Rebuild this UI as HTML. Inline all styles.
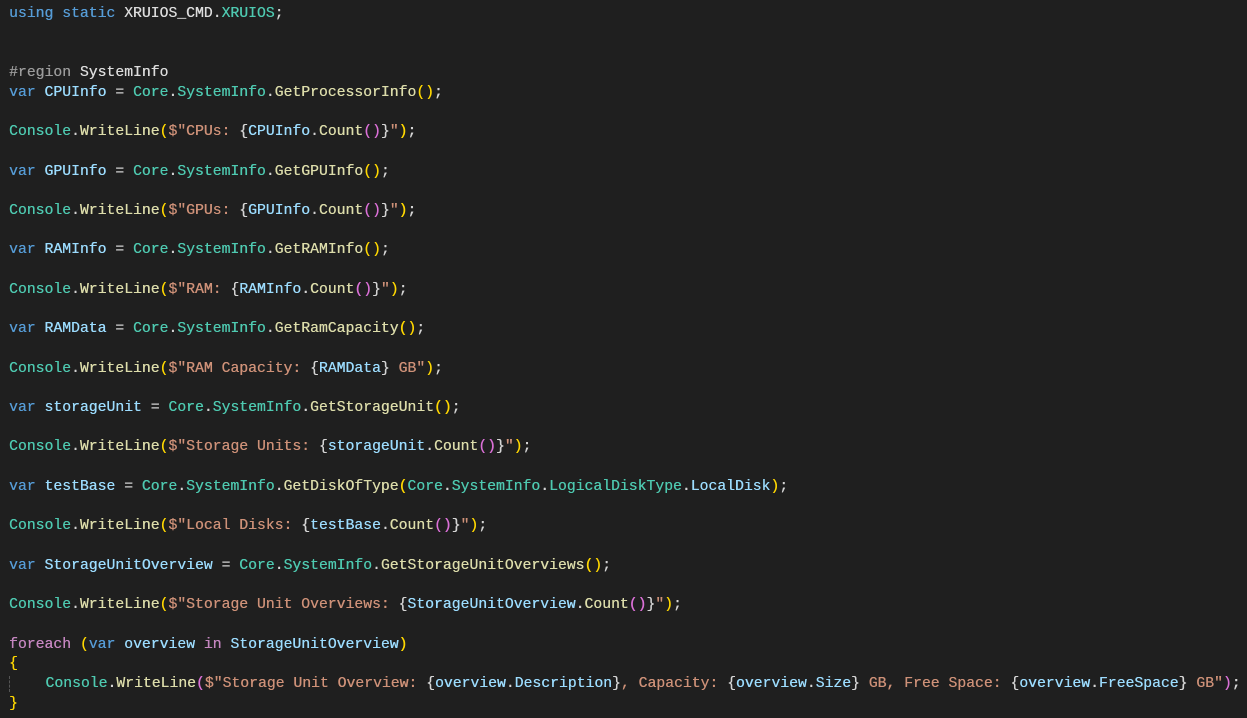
<!DOCTYPE html>
<html><head><meta charset="utf-8"><style>
html,body{margin:0;padding:0;background:#1f1f1f;width:1247px;height:718px;overflow:hidden}
pre{margin:0;position:absolute;left:9px;top:5px;font-family:"Liberation Mono",monospace;font-size:14.75px;line-height:19.71px;color:#d4d4d4;white-space:pre;text-shadow:0.3px 0 0 currentColor}
.k{color:#569cd6}.c{color:#c586c0}.t{color:#4ec9b0}.f{color:#dcdcaa}.s{color:#ce9178}.v{color:#9cdcfe}.p{color:#9b9b9b}.y{color:#ffd700}.m{color:#da70d6}.w{color:#dcdcdc}
.g{border-left:1px dashed #555}
</style></head><body><pre><span class="k">using static</span> <span class="w">XRUIOS_CMD</span>.<span class="t">XRUIOS</span>;


<span class="p">#region</span> <span class="w">SystemInfo</span>
<span class="k">var</span> <span class="v">CPUInfo</span> = <span class="t">Core</span>.<span class="t">SystemInfo</span>.<span class="f">GetProcessorInfo</span><span class="y">()</span>;

<span class="t">Console</span>.<span class="f">WriteLine</span><span class="y">(</span><span class="s">$"CPUs: </span>{<span class="v">CPUInfo</span>.<span class="f">Count</span><span class="m">()</span>}<span class="s">"</span><span class="y">)</span>;

<span class="k">var</span> <span class="v">GPUInfo</span> = <span class="t">Core</span>.<span class="t">SystemInfo</span>.<span class="f">GetGPUInfo</span><span class="y">()</span>;

<span class="t">Console</span>.<span class="f">WriteLine</span><span class="y">(</span><span class="s">$"GPUs: </span>{<span class="v">GPUInfo</span>.<span class="f">Count</span><span class="m">()</span>}<span class="s">"</span><span class="y">)</span>;

<span class="k">var</span> <span class="v">RAMInfo</span> = <span class="t">Core</span>.<span class="t">SystemInfo</span>.<span class="f">GetRAMInfo</span><span class="y">()</span>;

<span class="t">Console</span>.<span class="f">WriteLine</span><span class="y">(</span><span class="s">$"RAM: </span>{<span class="v">RAMInfo</span>.<span class="f">Count</span><span class="m">()</span>}<span class="s">"</span><span class="y">)</span>;

<span class="k">var</span> <span class="v">RAMData</span> = <span class="t">Core</span>.<span class="t">SystemInfo</span>.<span class="f">GetRamCapacity</span><span class="y">()</span>;

<span class="t">Console</span>.<span class="f">WriteLine</span><span class="y">(</span><span class="s">$"RAM Capacity: </span>{<span class="v">RAMData</span>}<span class="s"> GB"</span><span class="y">)</span>;

<span class="k">var</span> <span class="v">storageUnit</span> = <span class="t">Core</span>.<span class="t">SystemInfo</span>.<span class="f">GetStorageUnit</span><span class="y">()</span>;

<span class="t">Console</span>.<span class="f">WriteLine</span><span class="y">(</span><span class="s">$"Storage Units: </span>{<span class="v">storageUnit</span>.<span class="f">Count</span><span class="m">()</span>}<span class="s">"</span><span class="y">)</span>;

<span class="k">var</span> <span class="v">testBase</span> = <span class="t">Core</span>.<span class="t">SystemInfo</span>.<span class="f">GetDiskOfType</span><span class="y">(</span><span class="t">Core</span>.<span class="t">SystemInfo</span>.<span class="t">LogicalDiskType</span>.<span class="v">LocalDisk</span><span class="y">)</span>;

<span class="t">Console</span>.<span class="f">WriteLine</span><span class="y">(</span><span class="s">$"Local Disks: </span>{<span class="v">testBase</span>.<span class="f">Count</span><span class="m">()</span>}<span class="s">"</span><span class="y">)</span>;

<span class="k">var</span> <span class="v">StorageUnitOverview</span> = <span class="t">Core</span>.<span class="t">SystemInfo</span>.<span class="f">GetStorageUnitOverviews</span><span class="y">()</span>;

<span class="t">Console</span>.<span class="f">WriteLine</span><span class="y">(</span><span class="s">$"Storage Unit Overviews: </span>{<span class="v">StorageUnitOverview</span>.<span class="f">Count</span><span class="m">()</span>}<span class="s">"</span><span class="y">)</span>;

<span class="c">foreach</span> <span class="y">(</span><span class="k">var</span> <span class="v">overview</span> <span class="c">in</span> <span class="v">StorageUnitOverview</span><span class="y">)</span>
<span class="y">{</span>
<span class="g"> </span>   <span class="t">Console</span>.<span class="f">WriteLine</span><span class="m">(</span><span class="s">$"Storage Unit Overview: </span>{<span class="v">overview</span>.<span class="v">Description</span>}<span class="s">, Capacity: </span>{<span class="v">overview</span>.<span class="v">Size</span>}<span class="s"> GB, Free Space: </span>{<span class="v">overview</span>.<span class="v">FreeSpace</span>}<span class="s"> GB"</span><span class="m">)</span>;
<span class="y">}</span></pre></body></html>
